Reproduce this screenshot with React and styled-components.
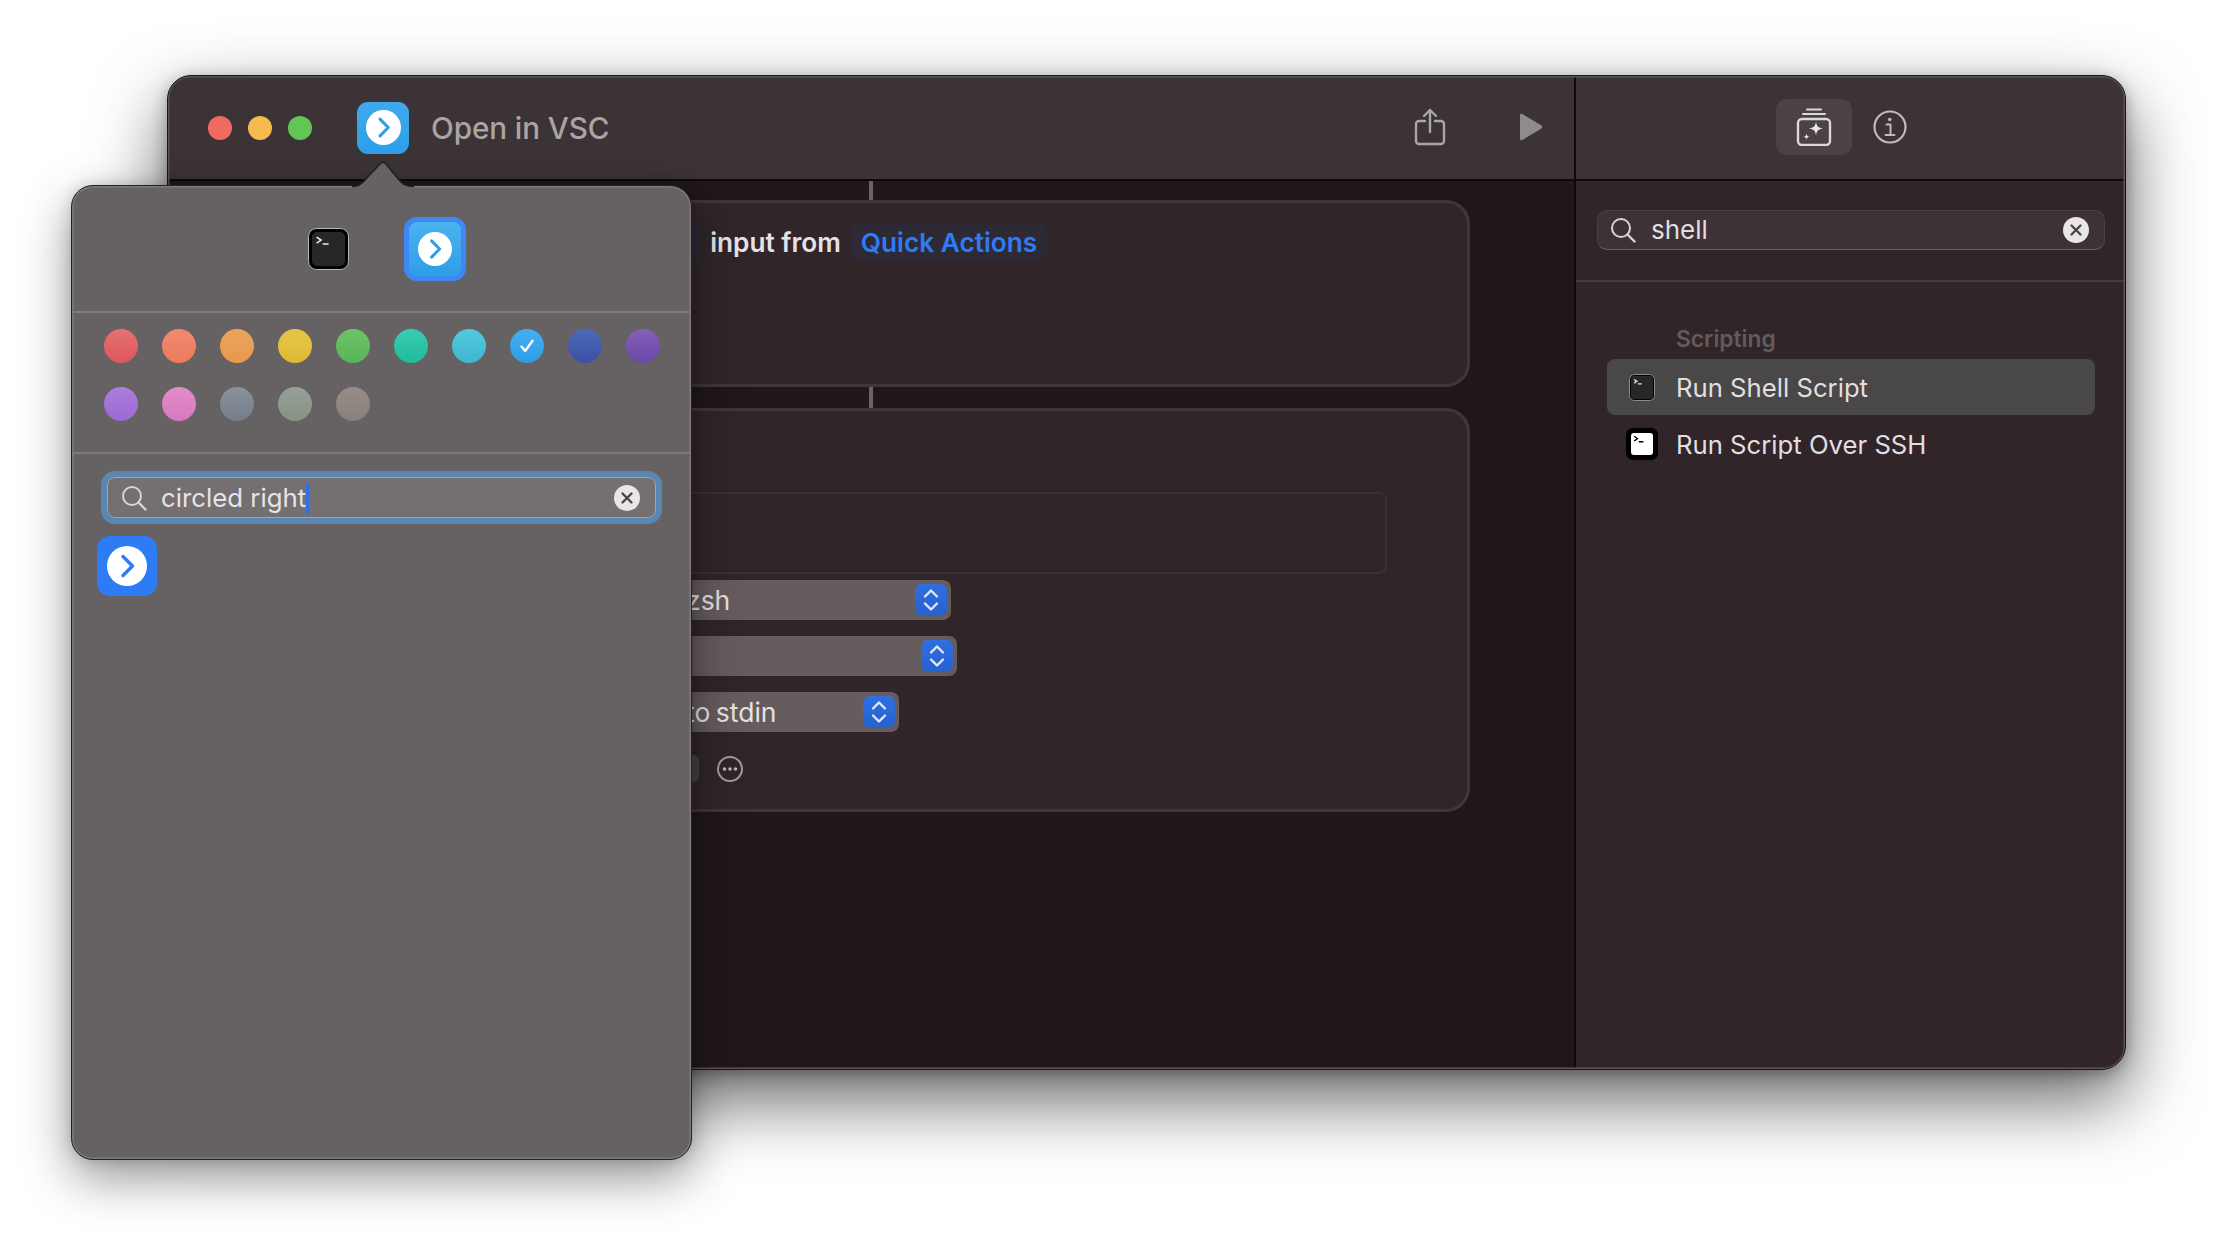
import React from "react";
import styled, { createGlobalStyle } from "styled-components";

const Global = createGlobalStyle`
  html, body { margin: 0; background: #fff; overflow: hidden; }
  * { box-sizing: border-box; }
`;

const Page = styled.div`
  position: relative;
  width: 2238px;
  height: 1240px;
  padding: 75px 0 0 167px;
  background: #fff;
  font-family: Inter, "Noto Sans", sans-serif;
`;

const Window = styled.div`
  position: relative;
  width: 1959px;
  height: 995px;
  display: flex;
  border-radius: 24px;
  overflow: hidden;
  border: 1.5px solid #191516;
  background: #211719;
  &::after {
    content: "";
    position: absolute;
    inset: 0;
    border-radius: 22px;
    box-shadow: inset 0 0 0 1.5px #5a5456;
    pointer-events: none;
  }
`;

const WindowShadow = styled.div`
  border-radius: 24px;
  width: 1959px;
  box-shadow: 0 30px 70px 2px rgba(0, 0, 0, 0.58), 0 4px 16px rgba(0, 0, 0, 0.3);
`;

const MainColumn = styled.div`
  width: 1408px;
  flex: none;
  display: flex;
  flex-direction: column;
  border-right: 2px solid #0c0a0a;
`;

const SideColumn = styled.div`
  flex: 1;
  display: flex;
  flex-direction: column;
  background: #30262a;
`;

const Toolbar = styled.div`
  height: 105px;
  flex: none;
  display: flex;
  align-items: center;
  background: #3b3336;
  border-bottom: 2px solid #0c0a0a;
  padding: ${(p) => p.$pad || "0"};
`;

const Light = styled.span`
  width: 24px;
  height: 24px;
  border-radius: 50%;
  background: ${(p) => p.$c};
  margin-right: 16px;
  flex: none;
`;

const Title = styled.div`
  font-size: 29.7px;
  font-weight: 500;
  color: #aaa4a5;
  margin-left: 22px;
  letter-spacing: -0.1px;
`;

const Badge = styled.div`
  width: ${(p) => p.$s}px;
  height: ${(p) => p.$s}px;
  border-radius: ${(p) => p.$r}px;
  background: ${(p) => p.$bg};
  display: flex;
  align-items: center;
  justify-content: center;
  flex: none;
  margin-left: ${(p) => p.$ml || 0}px;
`;

const ToolSpacer = styled.div`
  flex: 1;
`;

const ToolIcon = styled.div`
  display: flex;
  align-items: center;
  justify-content: center;
  margin-right: ${(p) => p.$mr || 0}px;
  margin-left: ${(p) => p.$ml || 0}px;
  margin-bottom: 2px;
`;

const ToolActive = styled.div`
  width: 76px;
  height: 56px;
  border-radius: 10px;
  background: #4a4244;
  display: flex;
  align-items: center;
  justify-content: center;
  margin-left: 200px;
  margin-bottom: 2px;
`;

const Canvas = styled.div`
  flex: 1;
  display: flex;
  flex-direction: column;
  align-items: center;
`;

const Connector = styled.div`
  width: 4px;
  height: ${(p) => p.$h}px;
  background: #6a6668;
  flex: none;
`;

const Card = styled.div`
  width: 1198px;
  height: ${(p) => p.$h}px;
  flex: none;
  background: #302629;
  border: 3px solid #413739;
  border-radius: 24px;
  padding: ${(p) => p.$pad};
`;

const ActionLine = styled.div`
  display: flex;
  align-items: center;
  gap: 10px;
  font-size: 26.2px;
  font-weight: 600;
  color: #e6e3e4;
`;

const Token = styled.span`
  height: 38px;
  display: inline-flex;
  align-items: center;
  padding: 0 10px;
  border-radius: 9px;
  background: #2e2a35;
  color: #2e7bf6;
  width: ${(p) => (p.$w ? `${p.$w}px` : "auto")};
  white-space: nowrap;
`;

const CardTitle = styled.div`
  height: 81px;
  display: flex;
  align-items: center;
  font-size: 26.2px;
  font-weight: 600;
  color: #e6e3e4;
`;

const ScriptBox = styled.div`
  height: 82px;
  width: 1087px;
  border: 2px solid #3b3133;
  border-radius: 8px;
  margin-bottom: 6px;
`;

const OptionRow = styled.div`
  display: flex;
  align-items: center;
  height: 40px;
  margin-bottom: 16px;
  color: #e6e3e4;
  font-size: 26.5px;
`;

const OptionLabel = styled.span`
  width: 364px;
  flex: none;
`;

const SelectBox = styled.div`
  width: ${(p) => p.$w}px;
  height: 40px;
  border-radius: 8px;
  background: #665c5e;
  display: flex;
  align-items: center;
  padding: 0 4px 0 22px;
  color: #e6e2e3;
  font-size: 26.5px;
  word-spacing: -2px;
`;

const SelectText = styled.span`
  flex: 1;
  text-align: left;
`;

const Stepper = styled.div`
  width: 32px;
  height: 32px;
  border-radius: 7px;
  background: linear-gradient(#2f6fe0, #2760cf);
  display: flex;
  align-items: center;
  justify-content: center;
  flex: none;
`;

const MoreRow = styled.div`
  display: flex;
  align-items: center;
  height: 27px;
  margin-top: 23px;
`;

const MiniButton = styled.div`
  width: 35px;
  height: 27px;
  border-radius: 6px;
  background: #4a4244;
  margin-left: 364px;
`;

const MoreIcon = styled.div`
  margin-left: 18px;
  display: flex;
`;

const SideSearchWrap = styled.div`
  height: 101px;
  padding: 29px 20px 0 21px;
  border-bottom: 2px solid #453b3e;
  flex: none;
`;

const SideSearch = styled.div`
  height: 40px;
  border-radius: 10px;
  background: #3d3337;
  border: 1.5px solid #4a4144;
  border-bottom-color: #6a6366;
  display: flex;
  align-items: center;
  padding: 0 15px 0 12px;
  gap: 15px;
  color: #e2dfe0;
  font-size: 26px;
`;

const SearchValue = styled.span`
  flex: 1;
  line-height: 1;
`;

const ClearDot = styled.div`
  width: 26px;
  height: 26px;
  border-radius: 50%;
  background: #e8e6e6;
  display: flex;
  align-items: center;
  justify-content: center;
  flex: none;
`;

const SideList = styled.div`
  padding: 40px 30px 0 31px;
  display: flex;
  flex-direction: column;
  gap: 1px;
`;

const GroupLabel = styled.div`
  height: 32px;
  padding-left: 69px;
  display: flex;
  align-items: center;
  font-size: 22.8px;
  font-weight: 600;
  color: #635a5c;
  margin-bottom: 4px;
`;

const ActionRow = styled.div`
  height: 56px;
  border-radius: 8px;
  background: ${(p) => (p.$on ? "#494747" : "transparent")};
  display: flex;
  align-items: center;
  color: #e2dfe0;
  font-size: 25.7px;
`;

const RowIcon = styled.div`
  width: 69px;
  flex: none;
  display: flex;
  justify-content: center;
  padding-left: 1px;
`;

const Popover = styled.div`
  position: absolute;
  left: 71px;
  top: 185px;
  width: 621px;
  height: 975px;
  border-radius: 22px;
  background: #666263;
  border: 1.5px solid #222;
  box-shadow: 0 18px 50px rgba(0, 0, 0, 0.42), 0 0 14px rgba(0, 0, 0, 0.16),
    inset 0 0 0 1.5px #7e7a7b;
`;

const Arrow = styled.svg`
  position: absolute;
  left: 279px;
  top: -25px;
`;

const IconTabs = styled.div`
  height: 127px;
  display: flex;
  align-items: center;
  justify-content: center;
  gap: 43px;
  border-bottom: 2px solid #7e7a7b;
`;

const IconCell = styled.div`
  width: 64px;
  display: flex;
  justify-content: center;
`;

const Selected = styled.div`
  width: 62px;
  height: 64px;
  border-radius: 13px;
  background: linear-gradient(#4cb2ef, #2e9ee8);
  border: 5px solid #3d88f3;
  display: flex;
  align-items: center;
  justify-content: center;
`;

const Colors = styled.div`
  height: 141px;
  padding: 16px 0 0 32px;
  display: grid;
  grid-template-columns: repeat(10, 34px);
  grid-auto-rows: 34px;
  column-gap: 24px;
  row-gap: 24px;
  border-bottom: 2px solid #7e7a7b;
`;

const Dot = styled.div`
  border-radius: 50%;
  background: linear-gradient(${(p) => p.$a}, ${(p) => p.$b});
  display: flex;
  align-items: center;
  justify-content: center;
`;

const PopSearch = styled.div`
  margin: 17px 29px 0 29px;
  height: 53px;
  border-radius: 14px;
  border: 6px solid #5a87b1;
  background: #747071;
  display: flex;
  align-items: center;
  padding: 1px 16px 0 14px;
  color: #e6e4e4;
  font-size: 25.8px;
  box-shadow: inset 0 0 0 1px #8fa9c4;
`;

const PopValue = styled.span`
  flex: 1;
  margin-left: 14px;
  display: flex;
  align-items: center;
  line-height: 1;
`;

const Caret = styled.span`
  width: 3px;
  height: 31px;
  background: #2e6ff0;
  flex: none;
`;

const Results = styled.div`
  padding: 12px 0 0 25px;
`;

const Check = () => (
  <svg width="18" height="18" viewBox="0 0 18 18" fill="none">
    <path d="M3.5 9.6 7.2 14 14.5 3.8" stroke="#fff" strokeWidth="2.3" strokeLinecap="round" strokeLinejoin="round" />
  </svg>
);

const ChevronDisc = ({ size, color }) => (
  <svg width={size} height={size} viewBox="0 0 40 40">
    <circle cx="20" cy="20" r="20" fill="#fff" />
    <path d="M16 10.5 25.5 20 16 29.5" fill="none" stroke={color} strokeWidth="3.5" strokeLinecap="round" strokeLinejoin="round" />
  </svg>
);

const Magnifier = ({ size = 26, color = "#d8d5d6" }) => (
  <svg width={size} height={size} viewBox="0 0 26 26" fill="none" style={{ flex: "none" }}>
    <circle cx="11" cy="11" r="9" stroke={color} strokeWidth="2" />
    <path d="M17.5 17.5 24.5 24.5" stroke={color} strokeWidth="2.4" strokeLinecap="round" />
  </svg>
);

const Cross = () => (
  <svg width="14" height="14" viewBox="0 0 14 14" fill="none">
    <path d="M2.5 2.5 11.5 11.5M11.5 2.5 2.5 11.5" stroke="#4a4647" strokeWidth="2.4" strokeLinecap="round" />
  </svg>
);

const Terminal = ({ w, h, inner, edge, glyph, pad, r }) => {
  const gx = pad + (w - 2 * pad) * 0.14;
  const gy = pad + (h - 2 * pad) * 0.15;
  const k = w / 41;
  return (
    <svg width={w} height={h} viewBox={`0 0 ${w} ${h}`} style={{ display: "block" }}>
      <rect x="0.5" y="0.5" width={w - 1} height={h - 1} rx={r} fill="#000" stroke={edge} />
      <rect x={pad} y={pad} width={w - 2 * pad} height={h - 2 * pad} rx={Math.max(r - 3, 1)} fill={inner} />
      <path
        d={`M${gx} ${gy} l${4.5 * k} ${3 * k} l${-4.5 * k} ${3 * k} M${gx + 6 * k} ${gy + 7 * k} h${6 * k}`}
        fill="none"
        stroke={glyph}
        strokeWidth={w > 35 ? 1.5 : 1.3}
      />
    </svg>
  );
};

const UpDown = () => (
  <svg width="20" height="26" viewBox="0 0 20 26" fill="none">
    <path d="M4 9.5 10 3.5 16 9.5M4 16.5 10 22.5 16 16.5" stroke="#dfe6f6" strokeWidth="2.4" strokeLinecap="round" strokeLinejoin="round" />
  </svg>
);

const Share = () => (
  <svg width="32" height="38" viewBox="0 0 32 38" fill="none" stroke="#aaa5a6" strokeWidth="2.4" strokeLinecap="round" strokeLinejoin="round">
    <path d="M11 13H5a3 3 0 0 0-3 3v17a3 3 0 0 0 3 3h22a3 3 0 0 0 3-3V16a3 3 0 0 0-3-3h-6" />
    <path d="M16 24V2M10 8l6-6 6 6" />
  </svg>
);

const Play = () => (
  <svg width="24" height="28" viewBox="0 0 24 28">
    <path d="M1 2.5C1 1 2.3.4 3.5 1.1L22.5 12.6c1 .6 1 2.2 0 2.8L3.5 26.9C2.3 27.6 1 27 1 25.5Z" fill="#8f8b8c" />
  </svg>
);

const Library = () => (
  <svg width="36" height="38" viewBox="0 0 36 38" fill="none">
    <path d="M11 1.5h14M7 6h22" stroke="#dcd9da" strokeWidth="2" strokeLinecap="round" />
    <rect x="2" y="11" width="32" height="26" rx="4" stroke="#dcd9da" strokeWidth="2.4" />
    <path d="M20 13.5c.9 5.2 2 6.3 7.5 7-5.5.8-6.6 1.900-7.500 7-.9-5.100-2-6.200-7.500-7 5.500-.7 6.600-1.800 7.500-7Z" fill="#e8e6e7" />
    <path d="M10.5 25.5c.3 2.300.9 2.900 3.500 3.300-2.600.4-3.200 1-3.500 3.300-.3-2.300-.9-2.900-3.500-3.300 2.600-.4 3.200-1 3.500-3.300Z" fill="#e8e6e7" />
  </svg>
);

const Info = () => (
  <svg width="34" height="34" viewBox="0 0 34 34" fill="none" stroke="#c0bbbc">
    <circle cx="17" cy="17" r="15.5" strokeWidth="2.2" />
    <circle cx="16.8" cy="9.5" r="1.8" fill="#c0bbbc" stroke="none" />
    <path d="M13.5 14.5h4v10.5M12.5 25h9" strokeWidth="2" strokeLinecap="round" strokeLinejoin="round" />
  </svg>
);

const More = () => (
  <svg width="26" height="26" viewBox="0 0 26 26" fill="none">
    <circle cx="13" cy="13" r="12" stroke="#a09b9c" strokeWidth="2" />
    <circle cx="7.5" cy="13" r="1.8" fill="#bdb9ba" />
    <circle cx="13" cy="13" r="1.8" fill="#bdb9ba" />
    <circle cx="18.5" cy="13" r="1.8" fill="#bdb9ba" />
  </svg>
);

const palette = [
  ["#e57273", "#dc5759"],
  ["#f08a70", "#ee7a5b"],
  ["#eba55f", "#e8984c"],
  ["#e5c64a", "#e0b931"],
  ["#6fc36b", "#57b656"],
  ["#3acbb0", "#1fbc9c"],
  ["#54c9dc", "#3db6cf"],
  ["#47aeee", "#2b9ee8", "check"],
  ["#4c6ab8", "#3a50a6"],
  ["#8461b8", "#6c46aa"],
  ["#ac7fdc", "#9c68d2"],
  ["#e28cc9", "#d878c0"],
  ["#8a929c", "#747d89"],
  ["#96a096", "#879186"],
  ["#968c88", "#8a7f7b"],
];

export default function App() {
  return (
    <Page>
      <Global />
      <WindowShadow>
        <Window>
          <MainColumn>
            <Toolbar $pad="0 31px 0 40px">
              <Light $c="#f06a5f" />
              <Light $c="#f5bb4e" />
              <Light $c="#62c554" />
              <Badge $s={52} $r={11} $bg="linear-gradient(#3eaaec, #2d9fe8)" $ml={29}>
                <ChevronDisc size={35} color="#2d9fe8" />
              </Badge>
              <Title>Open in VSC</Title>
              <ToolSpacer />
              <ToolIcon $mr={73}>
                <Share />
              </ToolIcon>
              <ToolIcon $mr={0}>
                <Play />
              </ToolIcon>
            </Toolbar>
            <Canvas>
              <Connector $h={19} />
              <Card $h={187} $pad="20px 22px">
                <ActionLine>
                  <span>Receive</span>
                  <Token $w={293}>Files and Folders</Token>
                  <span>input from</span>
                  <Token>Quick Actions</Token>
                </ActionLine>
              </Card>
              <Connector $h={21} />
              <Card $h={404} $pad="0 25px">
                <CardTitle>Run Shell Script</CardTitle>
                <ScriptBox />
                <OptionRow>
                  <OptionLabel>Shell:</OptionLabel>
                  <SelectBox $w={287}>
                    <SelectText>zsh</SelectText>
                    <Stepper><UpDown /></Stepper>
                  </SelectBox>
                </OptionRow>
                <OptionRow>
                  <OptionLabel>Input:</OptionLabel>
                  <SelectBox $w={293}>
                    <SelectText />
                    <Stepper><UpDown /></Stepper>
                  </SelectBox>
                </OptionRow>
                <OptionRow>
                  <OptionLabel>Pass Input:</OptionLabel>
                  <SelectBox $w={235}>
                    <SelectText>to stdin</SelectText>
                    <Stepper><UpDown /></Stepper>
                  </SelectBox>
                </OptionRow>
                <MoreRow>
                  <MiniButton />
                  <MoreIcon><More /></MoreIcon>
                </MoreRow>
              </Card>
            </Canvas>
          </MainColumn>
          <SideColumn>
            <Toolbar>
              <ToolActive><Library /></ToolActive>
              <ToolIcon $ml={21}><Info /></ToolIcon>
            </Toolbar>
            <SideSearchWrap>
              <SideSearch>
                <Magnifier />
                <SearchValue>shell</SearchValue>
                <ClearDot><Cross /></ClearDot>
              </SideSearch>
            </SideSearchWrap>
            <SideList>
              <GroupLabel>Scripting</GroupLabel>
              <ActionRow $on>
                <RowIcon>
                  <Terminal w={26} h={27} r={5} pad={2} inner="#272727" edge="#8d8d8d" glyph="#e8e8e8" />
                </RowIcon>
                Run Shell Script
              </ActionRow>
              <ActionRow>
                <RowIcon>
                  <Terminal w={32} h={32} r={6} pad={5} inner="#fff" edge="#000" glyph="#000" />
                </RowIcon>
                Run Script Over SSH
              </ActionRow>
            </SideList>
          </SideColumn>
        </Window>
      </WindowShadow>
      <Popover>
        <Arrow width="64" height="27" viewBox="0 0 64 27">
          <path d="M0 26c7 0 10-2 14-7L29 3c2-2.400 4-2.400 6 0L48 19c4 5 7 7 16 7v1H0Z" fill="#666263" />
          <path d="M1 25.500c6 0 9.500-2 13-6.500L29 3c2-2.400 4-2.400 6 0L48 19c4 4.500 7 6.500 15 6.500" fill="none" stroke="#1f1d1d" strokeWidth="1.4" />
        </Arrow>
        <IconTabs>
          <IconCell>
            <Terminal w={41} h={42} r={8} pad={4} inner="#272727" edge="#b4b6b8" glyph="#f0f0f0" />
          </IconCell>
          <IconCell>
            <Selected><ChevronDisc size={34} color="#2d9fe8" /></Selected>
          </IconCell>
        </IconTabs>
        <Colors>
          {palette.map(([a, b, flag], i) => (
            <Dot key={i} $a={a} $b={b}>
              {flag === "check" && <Check />}
            </Dot>
          ))}
        </Colors>
        <PopSearch>
          <Magnifier />
          <PopValue>circled right<Caret /></PopValue>
          <ClearDot><Cross /></ClearDot>
        </PopSearch>
        <Results>
          <Badge $s={60} $r={13} $bg="#2e7bf6">
            <ChevronDisc size={40} color="#2e7bf6" />
          </Badge>
        </Results>
      </Popover>
    </Page>
  );
}
